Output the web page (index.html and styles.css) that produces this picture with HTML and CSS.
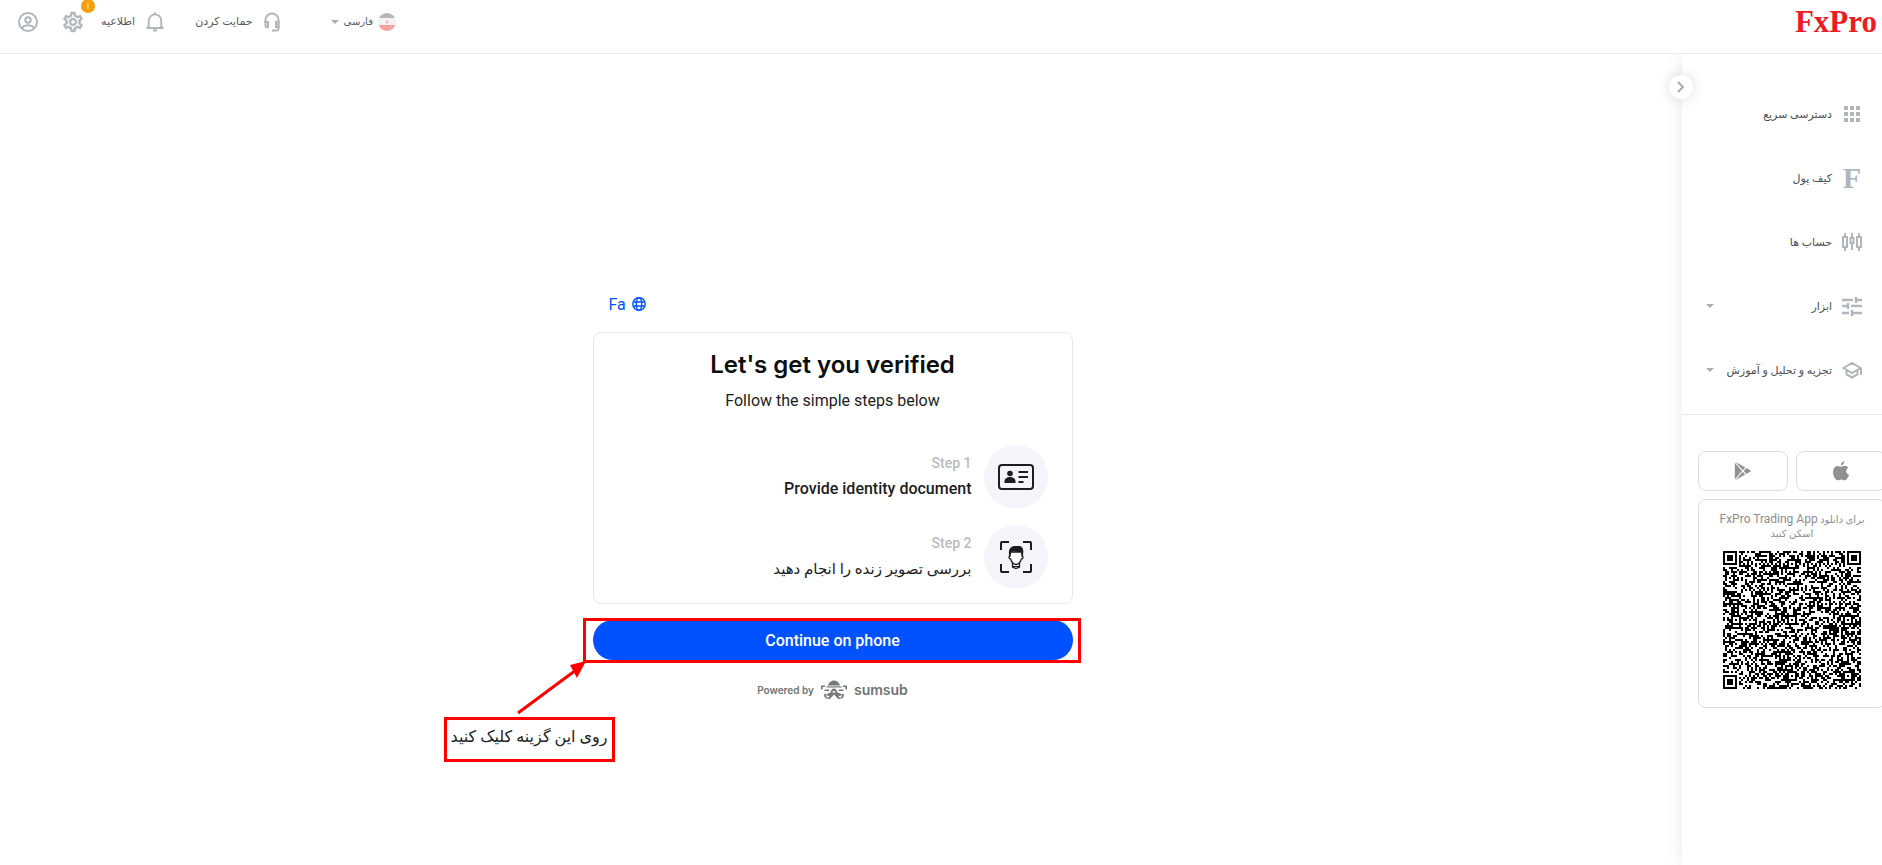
FILE: index.html
```
<!DOCTYPE html>
<html lang="fa" dir="rtl">
<head>
    <meta charset="UTF-8">
    <meta name="viewport" content="width=device-width, initial-scale=1.0">
    <title>FxPro</title>
    <link rel="stylesheet" href="styles.css">
</head>
<body>
    <header class="topbar">
        <a href="#" class="logo">FxPro</a>
        <nav class="topnav">
            <button type="button" class="nav-btn lang">
                <svg width="18" height="18" viewBox="0 0 18 18">
                    <clipPath id="flag"><circle cx="9" cy="9" r="9"/></clipPath>
                    <g clip-path="url(#flag)">
                        <rect width="18" height="18" fill="#f3f3f3"/>
                        <rect width="18" height="5" fill="#b3b7b7"/>
                        <rect y="12" width="18" height="6" fill="#f4a3a0"/>
                        <circle cx="9" cy="9" r="1.5" fill="#f6b9b6"/>
                    </g>
                </svg>
                <span>فارسی</span>
                <i class="caret"></i>
            </button>
            <a href="#" class="nav-btn support">
                <svg width="18" height="20" viewBox="1 0 18 20" fill="none" stroke="#b0b6bb" stroke-width="2">
                    <path d="M3.500 11V8a6.500 6.500 0 0 1 13 0v8.500a2 2 0 0 1-2 2H10"/>
                    <path d="M3.500 10h2.500v5H4.500a1 1 0 0 1-1-1zM16.500 10H14v5h2.500z"/>
                </svg>
                <span>حمایت کردن</span>
            </a>
            <a href="#" class="nav-btn notice">
                <svg width="20" height="20" viewBox="0 0 20 20" fill="none" stroke="#b0b6bb" stroke-width="1.800">
                    <path d="M1.500 16h17M3.800 16V8.500a6.200 6.200 0 0 1 12.400 0V16M2 16l2-2.500M18 16l-2-2.500"/>
                    <path d="M10 .3v2.500"/>
                    <path d="M8 18.400h4" stroke-width="2.200"/>
                </svg>
                <span>اطلاعیه</span>
            </a>
            <button type="button" class="nav-btn settings" aria-label="تنظیمات">
                <svg width="24" height="24" viewBox="0 0 24 24" fill="#b0b6bb" stroke="#b0b6bb" stroke-width=".4">
                    <path d="M19.430 12.980c.04-.32.07-.64.07-.98s-.03-.66-.07-.98l2.110-1.650c.19-.15.24-.42.12-.64l-2-3.460c-.09-.16-.26-.25-.44-.25-.06 0-.12.010-.17.030l-2.490 1c-.52-.4-1.080-.73-1.690-.98l-.38-2.650C14.460 2.180 14.250 2 14 2h-4c-.25 0-.46.180-.49.420l-.38 2.650c-.61.250-1.170.590-1.690.980l-2.490-1c-.06-.02-.12-.03-.18-.03-.17 0-.34.090-.43.250l-2 3.460c-.13.220-.07.490.12.640l2.110 1.650c-.04.320-.07.650-.07.980s.03.660.07.980l-2.110 1.650c-.19.150-.24.420-.12.640l2 3.460c.09.160.26.250.44.250.06 0 .12-.01.17-.03l2.490-1c.52.400 1.080.730 1.690.980l.38 2.650c.03.240.24.420.49.420h4c.25 0 .46-.18.49-.42l.38-2.650c.61-.25 1.170-.59 1.690-.98l2.490 1c.06.020.12.030.18.030.17 0 .34-.09.430-.25l2-3.460c.12-.22.070-.49-.12-.64l-2.110-1.650zm-1.980-1.710c.04.310.05.520.05.730s-.02.430-.05.730l-.14 1.130.89.700 1.080.840-.7 1.210-1.270-.51-1.040-.42-.9.680c-.43.320-.84.560-1.250.730l-1.060.430-.16 1.130-.2 1.350h-1.400l-.19-1.350-.16-1.130-1.060-.43c-.43-.18-.83-.41-1.230-.71l-.91-.7-1.060.430-1.270.510-.7-1.210 1.080-.84.89-.7-.14-1.130c-.03-.31-.05-.54-.05-.74s.02-.43.050-.73l.14-1.130-.89-.7-1.080-.84.7-1.210 1.270.510 1.040.420.900-.68c.43-.32.840-.56 1.250-.73l1.060-.43.160-1.130.200-1.350h1.390l.19 1.350.160 1.130 1.060.430c.43.180.830.410 1.230.710l.910.700 1.060-.43 1.270-.51.700 1.210-1.070.850-.89.700.140 1.130zM12 8c-2.210 0-4 1.790-4 4s1.790 4 4 4 4-1.790 4-4-1.790-4-4-4zm0 6c-1.100 0-2-.9-2-2s.9-2 2-2 2 .9 2 2-.9 2-2 2z"/>
                </svg>
                <b class="badge">i</b>
            </button>
            <button type="button" class="nav-btn profile" aria-label="حساب کاربری">
                <svg width="20" height="20" viewBox="0 0 20 20" fill="none" stroke="#b0b6bb" stroke-width="2">
                    <circle cx="10" cy="10" r="9"/>
                    <circle cx="10" cy="8" r="2.700"/>
                    <path d="M4 16c1.500-2 3.500-2.800 6-2.800s4.500.8 6 2.800"/>
                </svg>
            </button>
        </nav>
    </header>

    <div class="layout">
        <aside class="sidebar">
            <button type="button" class="toggle" aria-label="بستن منو">
                <svg width="8" height="12" viewBox="0 0 8 12" fill="none" stroke="#a6abb0" stroke-width="2"><path d="M1 1l5 5-5 5"/></svg>
            </button>
            <nav class="menu">
                <a href="#" class="menu-item">
                    <svg width="20" height="20" viewBox="0 0 20 20" fill="#b0b6bb"><path d="M2 2h4v4H2zM8 2h4v4H8zM14 2h4v4h-4zM2 8h4v4H2zM8 8h4v4H8zM14 8h4v4h-4zM2 14h4v4H2zM8 14h4v4H8zM14 14h4v4h-4z"/></svg>
                    <span>دسترسی سریع</span>
                </a>
                <a href="#" class="menu-item">
                    <b class="f-icon">F</b>
                    <span>کیف پول</span>
                </a>
                <a href="#" class="menu-item">
                    <svg width="20" height="20" viewBox="0 0 20 20" fill="none" stroke="#b0b6bb" stroke-width="2">
                        <path d="M3 1v4M3 15v4M10 1v5M10 11v7M17 1v4M17 15v4"/>
                        <path d="M1 5h4v10H1zM8.500 6h3v5h-3zM15 5h4v10h-4z"/>
                    </svg>
                    <span>حساب ها</span>
                </a>
                <a href="#" class="menu-item">
                    <svg width="20" height="20" viewBox="0 0 20 20" fill="none" stroke="#b0b6bb" stroke-width="2.400">
                        <path d="M0 4h11M14 4h6M14 1v6M0 10h6M9 10h11M6 7v6M0 17h7M10 17h10M10 14v6"/>
                    </svg>
                    <span>ابزار</span>
                    <i class="caret"></i>
                </a>
                <a href="#" class="menu-item">
                    <svg width="20" height="20" viewBox="0 0 20 20" fill="none" stroke="#b0b6bb" stroke-width="2">
                        <path d="M1.500 8L10 3l8.500 5-8.500 5zM4.500 10v4.500L10 17.500l5.500-3V10M19 8v7"/>
                    </svg>
                    <span>تجزیه و تحلیل و آموزش</span>
                    <i class="caret"></i>
                </a>
            </nav>
            <div class="apps">
                <div class="stores">
                    <a href="#" class="store" aria-label="App Store">
                        <svg width="16" height="20" viewBox="0 0 16 20" fill="#919191">
                            <path d="M11.300.3c.2 2-1.500 4-3.500 4.100C7.600 2.500 9.300.6 11.300.3zM8 5.700c.8 0 1.800-1 3.600-1 1.500 0 2.900.8 3.700 2-3 1.800-2.600 5.900.7 7.200-.7 2-2.300 5.200-4.200 5.300-1.300 0-1.800-.8-3.400-.8s-2.100.8-3.400.8C2.500 19.300 0 15 0 11c0-4 2.400-6.100 4.700-6.100 1.500 0 2.400.8 3.300.8z"/>
                        </svg>
                    </a>
                    <a href="#" class="store" aria-label="Google Play">
                        <svg width="18" height="20" viewBox="0 0 18 20" fill="#919191">
                            <path d="M1.300.8l10 5.700-2.500 2.800zM.8 1.700l7.200 8.300-7.200 8.300zM1.300 19.200l7.500-8.500 2.500 2.800zM12.400 7l4.800 3-4.800 3-2.700-3z"/>
                        </svg>
                    </a>
                </div>
                <div class="qr-card">
                    <p>برای دانلود <span class="latin">FxPro Trading App</span> اسکن کنید</p>
                    <svg id="qr" class="qr" viewBox="0 0 69 69" shape-rendering="crispEdges"></svg>
                </div>
            </div>
        </aside>

        <main class="content">
            <div class="verify">
                <a href="#" class="verify-lang">
                    <svg width="14" height="14" viewBox="0 0 14 14" fill="none" stroke="#0052ff" stroke-width="1.400">
                        <circle cx="7" cy="7" r="6.200"/>
                        <ellipse cx="7" cy="7" rx="2.700" ry="6.200"/>
                        <path d="M1.200 5h11.600M1.200 9h11.600"/>
                    </svg>
                    <span>Fa</span>
                </a>
                <section class="card">
                    <h1>Let's get you verified</h1>
                    <p class="subtitle">Follow the simple steps below</p>
                    <div class="step">
                        <span class="step-icon">
                            <svg width="36" height="26" viewBox="0 0 36 26" fill="none" stroke="#1b1d1f" stroke-width="2">
                                <rect x="1" y="1" width="34" height="24" rx="3"/>
                                <path d="M20.500 8h9.500M20.500 13h9.500M20.500 18h5"/>
                                <g fill="#1b1d1f" stroke="none">
                                    <circle cx="12" cy="9.500" r="2.800"/>
                                    <path d="M6.500 19v-1.500c0-3 2.500-4.500 5.500-4.500s5.500 1.500 5.500 4.500V19z"/>
                                </g>
                            </svg>
                        </span>
                        <div>
                            <p class="step-num">Step 1</p>
                            <p class="step-name">Provide identity document</p>
                        </div>
                    </div>
                    <div class="step">
                        <span class="step-icon">
                            <svg width="32" height="32" viewBox="0 0 32 32" fill="none" stroke="#1b1d1f" stroke-width="2">
                                <path d="M1 9V2q0-1 1-1h7M23 1h7q1 0 1 1v7M31 23v7q0 1-1 1h-7M9 31H2q-1 0-1-1v-7"/>
                                <path d="M12.500 21v5l3.500 1.500 3.500-1.500v-5" stroke-width="1.300"/>
                                <path d="M13 25.500h6" stroke-width="1"/>
                                <path d="M10 11v4c-1.500-.5-1.500 3 .6 3 .6 2.500 3 5.500 5.400 5.500s4.800-3 5.400-5.500c2.100 0 2.100-3.500.6-3v-4z" fill="#fff" stroke-width="1.300"/>
                                <path d="M9.300 15C7.800 8.500 10.500 5 15 5h5c3.300 1 4 5 2.700 10h-.8l-.9-4.200c-3 .6-5.500.2-7.600-.8-2 .8-2.700 2.300-3.100 5z" fill="#1b1d1f" stroke="none"/>
                            </svg>
                        </span>
                        <div>
                            <p class="step-num">Step 2</p>
                            <p class="step-name fa">بررسی تصویر زنده را انجام دهید</p>
                        </div>
                    </div>
                </section>
                <div class="action">
                    <button type="button" class="continue">Continue on phone</button>
                    <div class="highlight"></div>
                    <svg class="arrow" width="72" height="56" viewBox="0 0 72 56">
                        <path d="M2 54L60 11" stroke="#f00" stroke-width="3"/>
                        <path d="M70 2L54 6l7 13z" fill="#f00"/>
                    </svg>
                    <div class="callout">روی این گزینه کلیک کنید</div>
                </div>
                <div class="powered">
                    <span>Powered by</span>
                    <svg width="28" height="20" viewBox="0 0 28 20" fill="#76797c">
                        <path d="M8 5.500c.5-2.500 3-5 6-5s5.500 2.500 6 5z"/>
                        <path d="M6.500 6.300h15v1.200h-15z"/>
                        <path d="M1 5.500h4v1.600H2.600v2.400H1zM27 5.500h-4v1.600h2.400v2.400H27z"/>
                        <path d="M4.500 9.500h4.800v1.600H4.500zM18.700 9.500h4.800v1.600h-4.800z"/>
                        <path d="M14 8.500c2 0 3 2 3.500 4l4 1.500v1.500l-3 .5 2 3h-2.200L14 14.500 9.700 19H7.500l2-3-3-.5V14l4-1.500c.5-2 1.500-4 3.500-4z"/>
                        <path d="M4 14l1.600-.5 1 3.500L9 18.500H6L4.500 17zM24 14l-1.600-.5-1 3.500-2.400 1.500h3l1.500-1.500z"/>
                        <path d="M12.700 11.200h2.600v1.500h-2.600z" fill="#fff"/>
                    </svg>
                    <span class="sumsub">sumsub</span>
                </div>
            </div>
        </main>
    </div>

    <script>
        // QR code: finder, timing and alignment patterns over a seeded module fill
        const size = 69;
        const grid = [];
        let seed = 20231;
        for (let y = 0; y < size; y++) {
            grid[y] = [];
            for (let x = 0; x < size; x++) {
                seed = (seed * 1103515245 + 12345) % 2147483648;
                grid[y][x] = seed / 2147483648 < 0.5;
                if (x === 6 || y === 6) grid[y][x] = (x + y) % 2 === 0;
            }
        }

        function square(cx, cy, outer, isDark) {
            for (let y = -outer; y <= outer; y++) {
                for (let x = -outer; x <= outer; x++) {
                    if (grid[cy + y] && cx + x >= 0 && cx + x < size) {
                        grid[cy + y][cx + x] = isDark(Math.max(Math.abs(x), Math.abs(y)));
                    }
                }
            }
        }

        [[3, 3], [65, 3], [3, 65]].forEach(p => square(p[0], p[1], 4, d => d === 3 || d < 2));
        [[34, 6], [6, 34], [34, 34], [62, 34], [34, 62], [62, 62]].forEach(p => square(p[0], p[1], 2, d => d !== 1));

        let path = "";
        grid.forEach((row, y) => row.forEach((dark, x) => {
            if (dark) path += `M${x} ${y}h1v1h-1z`;
        }));
        document.getElementById("qr").innerHTML = `<path d="${path}"/>`;
    </script>
</body>
</html>
```
FILE: styles.css
```
* {
    box-sizing: border-box;
}

body {
    display: flex;
    flex-direction: column;
    min-height: 100vh;
    margin: 0;
    font-family: Roboto, "DejaVu Sans", sans-serif;
    color: #1b1d1f;
    background-color: #fff;
    overflow-x: hidden;
}

p, h1 {
    margin: 0;
}

a {
    color: inherit;
    text-decoration: none;
}

button {
    font-family: inherit;
    border: none;
    background: none;
    padding: 0;
    cursor: pointer;
}

svg {
    display: block;
    flex-shrink: 0;
}

/* Top bar */
.topbar {
    display: flex;
    justify-content: space-between;
    align-items: flex-start;
    height: 54px;
    padding: 0 5px 0 18px;
    border-bottom: 1px solid #e9eaea;
}

.logo {
    font-family: "Liberation Serif", serif;
    font-size: 31px;
    font-weight: bold;
    line-height: 44px;
    color: #ed1c24;
}

.topnav {
    display: flex;
    align-items: center;
    height: 44px;
}

.nav-btn {
    position: relative;
    display: flex;
    align-items: center;
    gap: 10px;
    font-size: 11px;
    line-height: 20px;
    color: #55595d;
}

.lang {
    gap: 5px;
    margin-left: 50px;
    font-size: 10px;
}

.support {
    margin-left: 30px;
}

.notice {
    margin-left: 16px;
}

.settings {
    margin-left: 23px;
}

.badge {
    position: absolute;
    top: -11px;
    right: -10px;
    width: 14px;
    height: 14px;
    border-radius: 50%;
    background-color: #f59e0b;
    font-size: 9px;
    line-height: 14px;
    text-align: center;
    color: #fbd9a0;
}

.caret {
    border: 4px solid transparent;
    border-top-color: #a9afb4;
    border-bottom: none;
}

/* Layout */
.layout {
    display: flex;
    flex: 1;
}

.sidebar {
    position: relative;
    width: 200px;
    flex-shrink: 0;
    padding-top: 28px;
    box-shadow: 0 0 16px rgba(60, 70, 110, 0.12);
    clip-path: inset(0 0 0 -40px);
}

.toggle {
    position: absolute;
    top: 21px;
    left: -13px;
    display: flex;
    align-items: center;
    justify-content: center;
    width: 24px;
    height: 24px;
    border-radius: 50%;
    background-color: #fff;
    box-shadow: 0 0 14px rgba(0, 0, 0, 0.14);
}

.menu {
    padding-bottom: 12px;
    border-bottom: 1px solid #e9eaea;
}

.menu-item {
    display: flex;
    align-items: center;
    gap: 10px;
    height: 64px;
    padding: 0 20px 0 24px;
    font-size: 11px;
    color: #4b4f53;
}

.menu-item .caret {
    margin-right: auto;
}

.f-icon {
    width: 20px;
    font-family: "Liberation Serif", serif;
    font-size: 30px;
    line-height: 30px;
    text-align: center;
    color: #b0b6bb;
}

.apps {
    margin: 36px -4px 0 16px;
}

.stores {
    display: grid;
    grid-template-columns: 1fr 1fr;
    gap: 8px;
    margin-bottom: 8px;
}

.store {
    display: flex;
    align-items: center;
    justify-content: center;
    height: 40px;
    border: 1px solid #dedede;
    border-radius: 8px;
}

.qr-card {
    padding: 12px 16px 18px;
    border: 1px solid #dedede;
    border-radius: 8px;
    text-align: center;
    font-size: 10px;
    line-height: 14px;
    color: #8b8e90;
}

.latin {
    font-size: 12px;
}

.qr {
    width: 138px;
    height: 138px;
    margin: 10px auto 0;
}

/* Verification */
.content {
    flex: 1;
    padding: 238px 17px 40px 0;
}

.verify {
    width: 480px;
    margin: 0 auto;
}

.verify-lang {
    display: flex;
    align-items: center;
    justify-content: flex-end;
    gap: 6px;
    height: 24px;
    margin-bottom: 16px;
    padding-left: 16px;
    font-size: 16px;
    color: #0052ff;
}

.card {
    padding: 16px 24px 14px;
    border: 1px solid #e6e7ea;
    border-radius: 8px;
}

.card h1 {
    font-family: Inter, sans-serif;
    font-size: 24px;
    font-weight: 600;
    line-height: 32px;
    text-align: center;
    color: #0b0d0f;
}

.subtitle {
    margin: 8px 0 32px;
    font-size: 16px;
    line-height: 24px;
    text-align: center;
}

.step {
    display: flex;
    align-items: center;
    gap: 12px;
    height: 64px;
}

.step + .step {
    margin-top: 16px;
}

.step-icon {
    display: flex;
    align-items: center;
    justify-content: center;
    width: 64px;
    height: 64px;
    border-radius: 50%;
    background-color: #f4f5fb;
}

.step-num {
    font-size: 14px;
    font-weight: 500;
    line-height: 24px;
    color: #b9bcc0;
}

.step-name {
    font-size: 16px;
    font-weight: 500;
    line-height: 28px;
}

.fa {
    font-size: 15px;
    font-weight: normal;
}

.action {
    position: relative;
    margin-top: 16px;
}

.continue {
    width: 100%;
    height: 40px;
    border-radius: 20px;
    background-color: #0052ff;
    font-size: 16px;
    font-weight: 500;
    color: #fff;
}

.highlight {
    position: absolute;
    top: -2px;
    right: -8px;
    bottom: -3px;
    left: -10px;
    border: 3px solid #f00;
    pointer-events: none;
}

.arrow {
    position: absolute;
    top: 39px;
    left: -77px;
}

.callout {
    position: absolute;
    top: 97px;
    left: -149px;
    width: 171px;
    height: 45px;
    border: 3px solid #f00;
    font-size: 16px;
    line-height: 34px;
    text-align: center;
    white-space: nowrap;
}

.powered {
    display: flex;
    direction: ltr;
    align-items: center;
    justify-content: center;
    gap: 6px;
    margin-top: 20px;
    font-family: Inter, sans-serif;
    font-size: 10px;
    font-weight: 600;
    line-height: 20px;
    color: #6f7275;
}

.sumsub {
    font-size: 14px;
}
```
